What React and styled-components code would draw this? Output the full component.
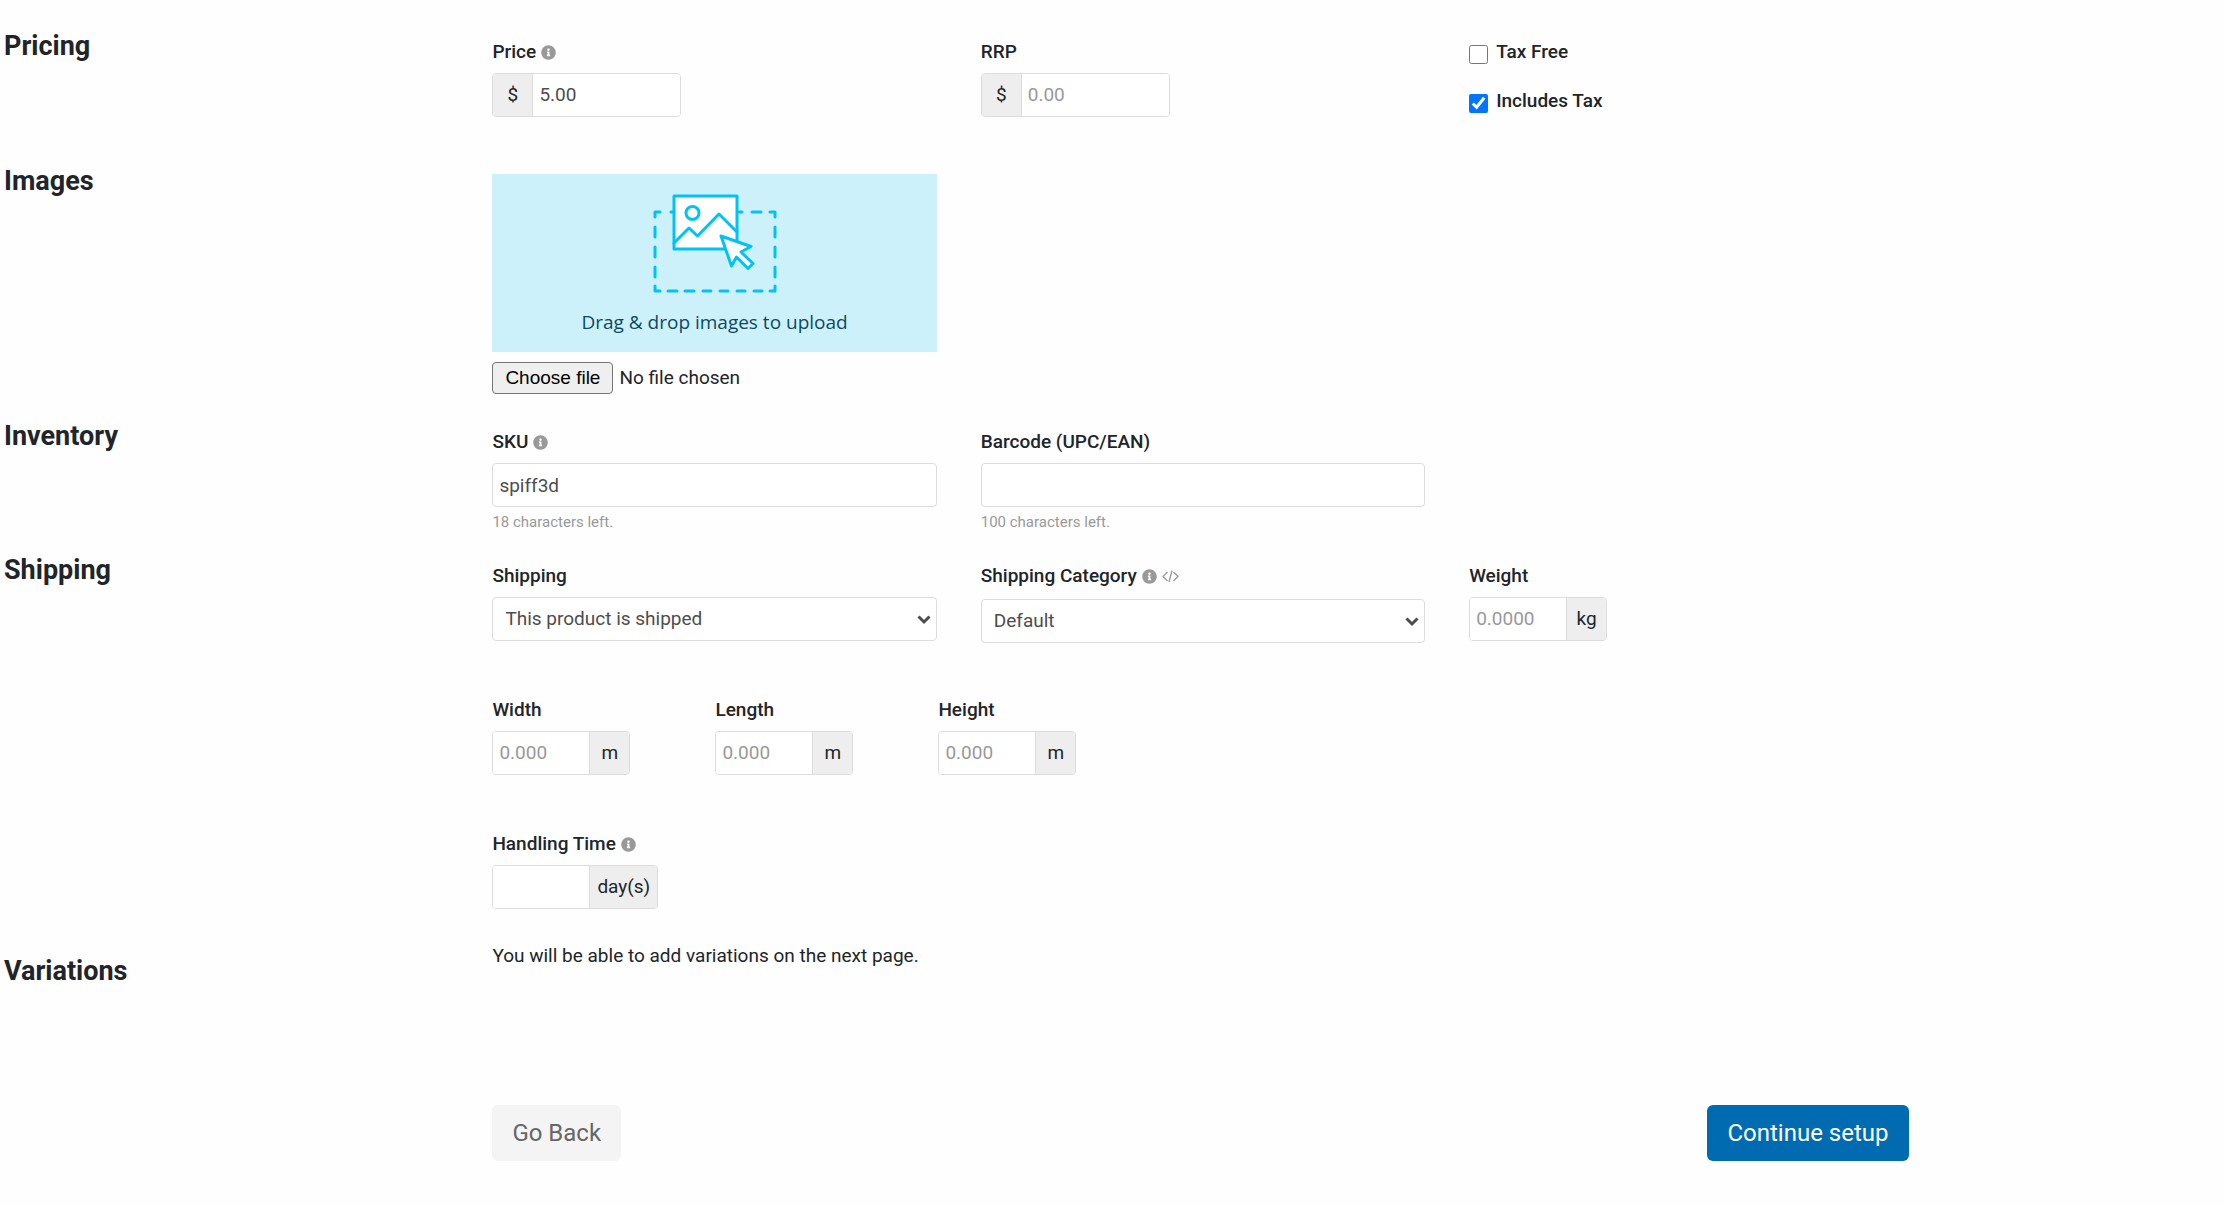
import React, { useId } from "react";
import styled, { createGlobalStyle } from "styled-components";
import { FaInfoCircle } from "react-icons/fa";

const GlobalStyle = createGlobalStyle`
  *, *::before, *::after { box-sizing: border-box; }
  body {
    margin: 0;
    background: #fefefe;
    color: #212529;
    font: 400 19px/28px Roboto, "Liberation Sans", sans-serif;
  }
  input, select, button { font: inherit; }
`;

const Page = styled.form`
  padding: 30px 14% 45px 4px;
`;

const Section = styled.section`
  display: grid;
  grid-template-columns: repeat(4, minmax(0, 1fr));
  column-gap: 44px;
`;

const Heading = styled.h2`
  margin: 0;
  padding-top: ${(p) => (p.$lowered ? "13px" : "0")};
  font-size: 27px;
  line-height: 32px;
  font-weight: 700;
`;

const Body = styled.div`
  grid-column: span 3;
`;

const Columns = styled.div`
  display: grid;
  grid-template-columns: repeat(3, minmax(0, 1fr));
  column-gap: 44px;
  padding-top: 8px;
  min-height: ${(p) => p.$height || 134}px;
`;

const Measures = styled.div`
  display: flex;
  gap: 85px;
  padding-top: 8px;
  min-height: ${(p) => p.$height || 134}px;
`;

const FieldBox = styled.div`
  display: flex;
  flex-direction: column;
  align-items: stretch;
`;

const LabelRow = styled.div`
  display: flex;
  align-items: center;
  gap: 5px;
  margin-bottom: ${(p) => (p.$spaced ? "9px" : "7px")};
  color: #999;
`;

const Label = styled.label`
  font-weight: 500;
  color: #212529;
`;

const TextInput = styled.input`
  width: 100%;
  height: 44px;
  padding: 0 6px;
  border: 1px solid #dcdcdc;
  border-radius: 4px;
  background: #fff;
  color: #4d4d4d;
  outline: none;
  &::placeholder { color: #999; opacity: 1; }
`;

const Group = styled.div`
  display: flex;
  width: ${(p) => p.$width || "max-content"};
  height: 44px;
  border: 1px solid #dcdcdc;
  border-radius: 4px;
  background: #fff;
  overflow: hidden;
`;

const GroupInput = styled(TextInput)`
  flex: 1;
  width: 96px;
  min-width: 0;
  height: auto;
  border: 0;
  border-radius: 0;
`;

const Addon = styled.span`
  display: flex;
  align-items: center;
  justify-content: center;
  min-width: 40px;
  padding: 0 7px;
  background: #eee;
  border: 0 solid #dcdcdc;
  border-width: ${(p) => (p.$before ? "0 1px 0 0" : "0 0 0 1px")};
`;

const Hint = styled.small`
  font-size: 15px;
  line-height: 30px;
  color: #999;
`;

const SelectBox = styled.div`
  position: relative;
`;

const Select = styled.select`
  appearance: none;
  display: block;
  width: 100%;
  height: 44px;
  padding: 0 32px 0 12px;
  border: 1px solid #dcdcdc;
  border-radius: 4px;
  background: #fff;
  color: #4d4d4d;
`;

const Chevron = styled.svg`
  position: absolute;
  right: 6px;
  top: 17px;
  pointer-events: none;
`;

const Checks = styled.div`
  display: flex;
  flex-direction: column;
  gap: 21px;
`;

const CheckLabel = styled.label`
  display: flex;
  align-items: flex-start;
  gap: 8px;
  font-weight: 500;
`;

const Check = styled.input`
  width: 19px;
  height: 19px;
  margin: 7px 0 0;
  accent-color: #0075ff;
`;

const Upload = styled.div`
  min-height: 255px;
  padding-top: 9px;
`;

const DropZone = styled.div`
  display: flex;
  flex-direction: column;
  align-items: center;
  gap: 14px;
  width: calc((100% - 88px) / 3);
  padding: 20px 0 16px;
  background: #cdf1fb;
  color: #0d4861;
  font-family: "Open Sans", "Noto Sans", sans-serif;
`;

const FileRow = styled.div`
  display: flex;
  align-items: center;
  gap: 6px;
  margin-top: 10px;
`;

const FileInput = styled.input`
  position: absolute;
  width: 1px;
  height: 1px;
  opacity: 0;
`;

const FileButton = styled.label`
  padding: 0 12px;
  border: 1px solid #767676;
  border-radius: 4px;
  background: #efefef;
  color: #000;
  line-height: 30px;
  font-family: "Liberation Sans", Arial, sans-serif;
`;

const Note = styled.p`
  margin: 0;
`;

const Actions = styled.div`
  display: grid;
  grid-template-columns: repeat(4, minmax(0, 1fr));
  column-gap: 44px;
  margin-top: 118px;
`;

const ActionBar = styled.div`
  grid-column: 2 / -1;
  display: flex;
  justify-content: space-between;
  padding-right: 5px;
`;

const Button = styled.button`
  height: 56px;
  padding: 0 20px;
  border: 0;
  border-radius: 6px;
  font-size: 24px;
  background: ${(p) => (p.$primary ? "#006bb1" : "#f4f4f4")};
  color: ${(p) => (p.$primary ? "#fff" : "#666")};
`;

const CodeIcon = () => (
  <svg width="17" height="14" viewBox="0 0 17 14" fill="none" stroke="#999" strokeWidth="1.3" aria-hidden="true">
    <path d="M5.500 3 1 7.500l4.500 4.500M11.500 3l4.500 4.500-4.500 4.500M10 1.500 7 13" />
  </svg>
);

const UploadArt = () => (
  <svg width="124" height="100" viewBox="0 0 124 100" fill="none" stroke="#00c3f3" strokeWidth="3" strokeLinecap="round" strokeLinejoin="round" aria-hidden="true">
    <path d="M2 23V18H7M117 18H122V23M2 92V97H7M117 97H122V92" />
    <path d="M18 18H24M86 18H89M99 18H108" />
    <path d="M2 33V43M2 53V63M2 73V83M122 33V43M122 53V63M122 73V83" />
    <path d="M15 97H24M32 97H41M50 97H58M67 97H75M84 97H92M101 97H109" />
    <path d="M21 2H84V55H21Z" fill="#fff" />
    <circle cx="39.500" cy="19" r="6.500" />
    <path d="M21 49 36 34 44.500 42 66 20 84 38" />
    <path d="M68 42 98 52.500 88 58 100 69.500 95 74.500 83.500 63 78.500 72Z" fill="#fff" />
  </svg>
);

function Field({ label, icons, spaced, hint, children }) {
  const id = useId();
  return (
    <FieldBox>
      <LabelRow $spaced={spaced}>
        <Label htmlFor={id}>{label}</Label>
        {icons}
      </LabelRow>
      {children(id)}
      {hint && <Hint>{hint}</Hint>}
    </FieldBox>
  );
}

const Info = () => <FaInfoCircle size={15} aria-hidden="true" />;

function Money(props) {
  return (
    <Group $width="189px">
      <Addon $before>$</Addon>
      <GroupInput type="text" {...props} />
    </Group>
  );
}

function Measure({ unit, ...props }) {
  return (
    <Group>
      <GroupInput type="text" {...props} />
      <Addon>{unit}</Addon>
    </Group>
  );
}

function Dropdown({ id, option }) {
  return (
    <SelectBox>
      <Select id={id}>
        <option>{option}</option>
      </Select>
      <Chevron width="14" height="11" viewBox="0 0 14 11" fill="none" stroke="#4d4d4d" strokeWidth="3" aria-hidden="true">
        <path d="M1.500 2.500 7 8l5.500-5.500" />
      </Chevron>
    </SelectBox>
  );
}

export default function App() {
  return (
    <>
      <GlobalStyle />
      <Page onSubmit={(e) => e.preventDefault()}>
        <Section>
          <Heading>Pricing</Heading>
          <Body>
            <Columns $height={135}>
              <Field label="Price" icons={<Info />}>
                {(id) => <Money id={id} defaultValue="5.00" />}
              </Field>
              <Field label="RRP">{(id) => <Money id={id} placeholder="0.00" />}</Field>
              <Checks>
                <CheckLabel>
                  <Check type="checkbox" />
                  Tax Free
                </CheckLabel>
                <CheckLabel>
                  <Check type="checkbox" defaultChecked />
                  Includes Tax
                </CheckLabel>
              </Checks>
            </Columns>
          </Body>
        </Section>

        <Section>
          <Heading>Images</Heading>
          <Body>
            <Upload>
              <DropZone>
                <UploadArt />
                Drag &amp; drop images to upload
              </DropZone>
              <FileRow>
                <FileInput type="file" id="images" multiple />
                <FileButton htmlFor="images">Choose file</FileButton>
                <span>No file chosen</span>
              </FileRow>
            </Upload>
          </Body>
        </Section>

        <Section>
          <Heading>Inventory</Heading>
          <Body>
            <Columns>
              <Field label="SKU" icons={<Info />} hint="18 characters left.">
                {(id) => <TextInput id={id} type="text" defaultValue="spiff3d" />}
              </Field>
              <Field label="Barcode (UPC/EAN)" hint="100 characters left.">
                {(id) => <TextInput id={id} type="text" />}
              </Field>
            </Columns>
          </Body>
        </Section>

        <Section>
          <Heading>Shipping</Heading>
          <Body>
            <Columns>
              <Field label="Shipping">
                {(id) => <Dropdown id={id} option="This product is shipped" />}
              </Field>
              <Field label="Shipping Category" spaced icons={<><Info /><CodeIcon /></>}>
                {(id) => <Dropdown id={id} option="Default" />}
              </Field>
              <Field label="Weight">
                {(id) => <Measure id={id} placeholder="0.0000" unit="kg" />}
              </Field>
            </Columns>
            <Measures>
              {["Width", "Length", "Height"].map((name) => (
                <Field key={name} label={name}>
                  {(id) => <Measure id={id} placeholder="0.000" unit="m" />}
                </Field>
              ))}
            </Measures>
            <Measures $height={120}>
              <Field label="Handling Time" icons={<Info />}>
                {(id) => <Measure id={id} unit="day(s)" />}
              </Field>
            </Measures>
          </Body>
        </Section>

        <Section>
          <Heading $lowered>Variations</Heading>
          <Body>
            <Note>You will be able to add variations on the next page.</Note>
          </Body>
        </Section>

        <Actions>
          <ActionBar>
            <Button type="button">Go Back</Button>
            <Button type="submit" $primary>Continue setup</Button>
          </ActionBar>
        </Actions>
      </Page>
    </>
  );
}
